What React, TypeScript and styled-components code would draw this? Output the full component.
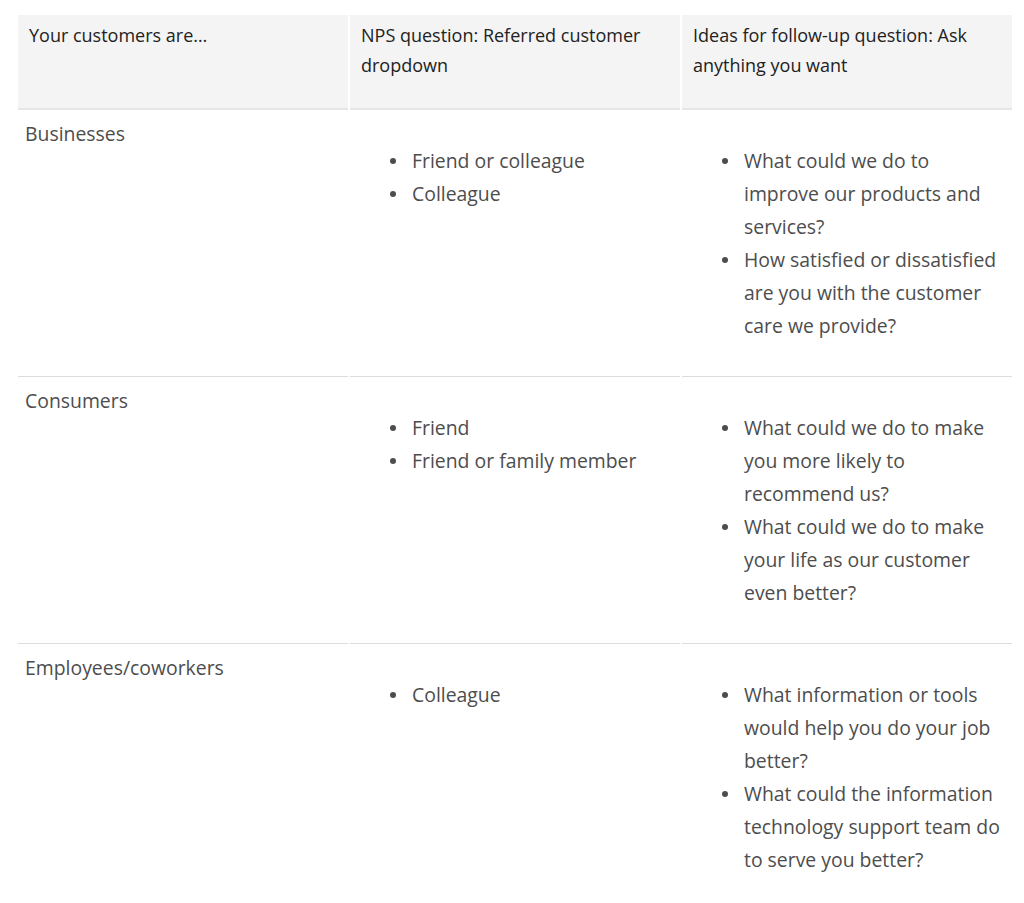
import React from "react";
import styled, { createGlobalStyle } from "styled-components";

const Global = createGlobalStyle`
  html, body { margin: 0; padding: 0; background: #ffffff; }
  body { font-family: "Open Sans", "Liberation Sans", sans-serif; }
`;

const Page = styled.div`
  padding: 15px 12px 0 18px;
`;

const Grid = styled.div`
  display: grid;
  grid-template-columns: 330px 330px 330px;
  column-gap: 2px;
  width: 994px;
`;

const HeadCell = styled.div`
  background: #f4f4f4;
  border-bottom: 2px solid #e6e6e6;
  padding: 5px 10px 28px 11px;
  font-size: 18px;
  line-height: 30px;
  color: #222222;
  min-height: 60px;
`;

const Cell = styled.div<{ $last?: boolean }>`
  border-bottom: ${(p) => (p.$last ? "none" : "1px solid #dddddd")};
  padding: 7px 6px 0 7px;
  font-size: 19.4px;
  line-height: 33px;
  color: #4d4d4d;
`;

const List = styled.ul`
  margin: 27px 0 34px;
  padding: 0 0 0 55px;
  list-style: none;
`;

const Item = styled.li`
  position: relative;
  &::before {
    content: "";
    position: absolute;
    left: -22px;
    top: 13.5px;
    width: 6px;
    height: 6px;
    border-radius: 50%;
    background: #4d4d4d;
  }
`;

type Row = { who: string; refs: string[]; ideas: string[] };

const rows: Row[] = [
  {
    who: "Businesses",
    refs: ["Friend or colleague", "Colleague"],
    ideas: [
      "What could we do to improve our products and services?",
      "How satisfied or dissatisfied are you with the customer care we provide?",
    ],
  },
  {
    who: "Consumers",
    refs: ["Friend", "Friend or family member"],
    ideas: [
      "What could we do to make you more likely to recommend us?",
      "What could we do to make your life as our customer even better?",
    ],
  },
  {
    who: "Employees/coworkers",
    refs: ["Colleague"],
    ideas: [
      "What information or tools would help you do your job better?",
      "What could the information technology support team do to serve you better?",
    ],
  },
];

export default function App() {
  return (
    <>
      <Global />
      <Page>
        <Grid>
          <HeadCell>Your customers are…</HeadCell>
          <HeadCell>NPS question: Referred customer dropdown</HeadCell>
          <HeadCell>Ideas for follow-up question: Ask anything you want</HeadCell>
          {rows.map((r, i) => {
            const last = i === rows.length - 1;
            return (
              <React.Fragment key={r.who}>
                <Cell $last={last}>{r.who}</Cell>
                <Cell $last={last}>
                  <List>
                    {r.refs.map((t) => (
                      <Item key={t}>{t}</Item>
                    ))}
                  </List>
                </Cell>
                <Cell $last={last}>
                  <List>
                    {r.ideas.map((t) => (
                      <Item key={t}>{t}</Item>
                    ))}
                  </List>
                </Cell>
              </React.Fragment>
            );
          })}
        </Grid>
      </Page>
    </>
  );
}
